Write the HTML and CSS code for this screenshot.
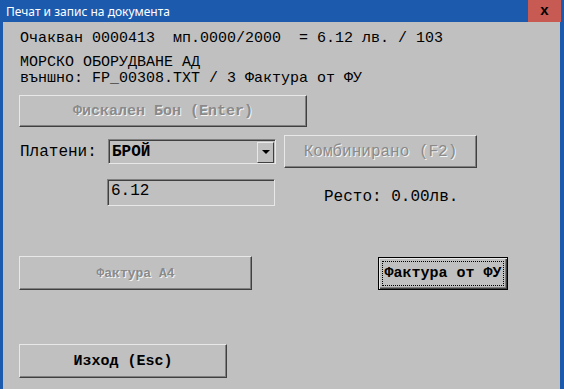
FILE: index.html
```html
<!DOCTYPE html>
<html>
<head>
  <title>Печат и запис на документа</title>
  <link rel="stylesheet" href="styles.css">
</head>
<body>
  <div class="window">
    <div class="titlebar">
      <span class="title">Печат и запис на документа</span>
      <span class="close">x</span>
    </div>
    <div class="content">
      <div class="info first">Очакван 0000413  мп.0000/2000  = 6.12 лв. / 103</div>
      <div class="info client">МОРСКО ОБОРУДВАНЕ АД</div>
      <div class="info">външно: FP_00308.TXT / 3 Фактура от ФУ</div>

      <button class="btn disabled fiscal">Фискален Бон (Enter)</button>

      <div class="row pay">
        <span class="label">Платени:</span>
        <div class="select">
          <span class="value">БРОЙ</span>
          <span class="drop"><span class="arrow"></span></span>
        </div>
        <button class="btn disabled combo">Комбинирано (F2)</button>
      </div>

      <div class="row amount">
        <div class="field">6.12</div>
        <span class="change">Ресто: 0.00лв.</span>
      </div>

      <div class="row invoices">
        <button class="btn disabled a4">Фактура А4</button>
        <button class="btn default fu"><span class="focus">Фактура от ФУ</span></button>
      </div>

      <button class="btn quit">Изход (Esc)</button>
    </div>
  </div>
</body>
</html>
```

FILE: styles.css
```css
body {
  margin: 0;
  background-color: #c0c0c0;
  font-family: "Liberation Mono", "Courier New", monospace;
  color: #000;
}

.window {
  width: 564px;
  height: 389px;
  background-color: #1c5aae;
  display: flex;
  flex-direction: column;
  overflow: hidden;
}

.titlebar {
  height: 22px;
  display: flex;
  align-items: center;
  flex-shrink: 0;
}

.title {
  font-family: "Noto Sans", sans-serif;
  font-size: 12px;
  color: #fff;
  padding-left: 6px;
  flex: 1;
}

.close {
  width: 33px;
  height: 22px;
  margin-right: 3px;
  background-color: #c75a52;
  font-family: "Liberation Sans", sans-serif;
  font-weight: bold;
  font-size: 15px;
  line-height: 20px;
  text-align: center;
}

.content {
  flex: 1;
  margin: 0 4px 0 3px;
  background-color: #c0c0c0;
  padding: 9px 0 0 16px;
  display: flex;
  flex-direction: column;
  align-items: flex-start;
}

.info {
  font-size: 15px;
  line-height: 16px;
  padding-left: 1px;
  white-space: pre;
}

.client {
  margin-top: 8px;
}

.btn {
  font-family: "Liberation Mono", "Courier New", monospace;
  background-color: #c0c0c0;
  border: 1px solid;
  border-color: #e8e8e8 #404040 #404040 #e8e8e8;
  box-shadow: inset -1px -1px 0 #808080;
  padding: 0;
  font-size: 15px;
  font-weight: bold;
  color: #000;
  white-space: nowrap;
}

.disabled {
  color: #8a8a8a;
  text-shadow: 1px 1px 0 #f4f4f4;
}

.fiscal {
  width: 288px;
  height: 32px;
  margin-top: 8px;
}

.row {
  display: flex;
  align-items: center;
}

.pay {
  margin-top: 8px;
}

.label {
  width: 88px;
  font-size: 16px;
  padding-left: 1px;
}

.select {
  width: 168px;
  height: 25px;
  box-sizing: border-box;
  border: 1px solid;
  border-color: #808080 #e8e8e8 #e8e8e8 #808080;
  box-shadow: inset 1px 1px 0 #404040;
  display: flex;
  align-items: center;
  padding: 1px 1px 0 3px;
}

.value {
  flex: 1;
  font-size: 16px;
  font-weight: bold;
}

.drop {
  width: 17px;
  height: 21px;
  box-sizing: border-box;
  border: 1px solid;
  border-color: #e8e8e8 #404040 #404040 #e8e8e8;
  display: flex;
  align-items: center;
  justify-content: center;
}

.arrow {
  width: 0;
  height: 0;
  border-left: 4px solid transparent;
  border-right: 4px solid transparent;
  border-top: 4px solid #000;
}

.combo {
  width: 193px;
  height: 33px;
  margin-left: 8px;
  font-size: 16px;
  font-weight: normal;
}

.amount {
  margin-top: 11px;
}

.field {
  width: 168px;
  height: 27px;
  box-sizing: border-box;
  margin-left: 88px;
  border: 1px solid;
  border-color: #808080 #e8e8e8 #e8e8e8 #808080;
  box-shadow: inset 1px 1px 0 #404040;
  font-size: 16px;
  padding: 2px 0 0 3px;
}

.change {
  font-size: 16px;
  margin-left: 49px;
  padding-top: 8px;
}

.invoices {
  margin-top: 50px;
}

.a4 {
  width: 233px;
  height: 34px;
  font-size: 13px;
}

.fu {
  width: 130px;
  height: 33px;
  margin-left: 126px;
  border: 1px solid #000;
  box-shadow: inset 1px 1px 0 #e8e8e8, inset -1px -1px 0 #404040, inset -2px -2px 0 #808080;
  display: flex;
  padding: 3px;
}

.focus {
  flex: 1;
  border: 1px dotted #000;
  display: flex;
  align-items: center;
  justify-content: center;
  font-weight: bold;
}

.quit {
  width: 208px;
  height: 34px;
  margin-top: 54px;
}
```
